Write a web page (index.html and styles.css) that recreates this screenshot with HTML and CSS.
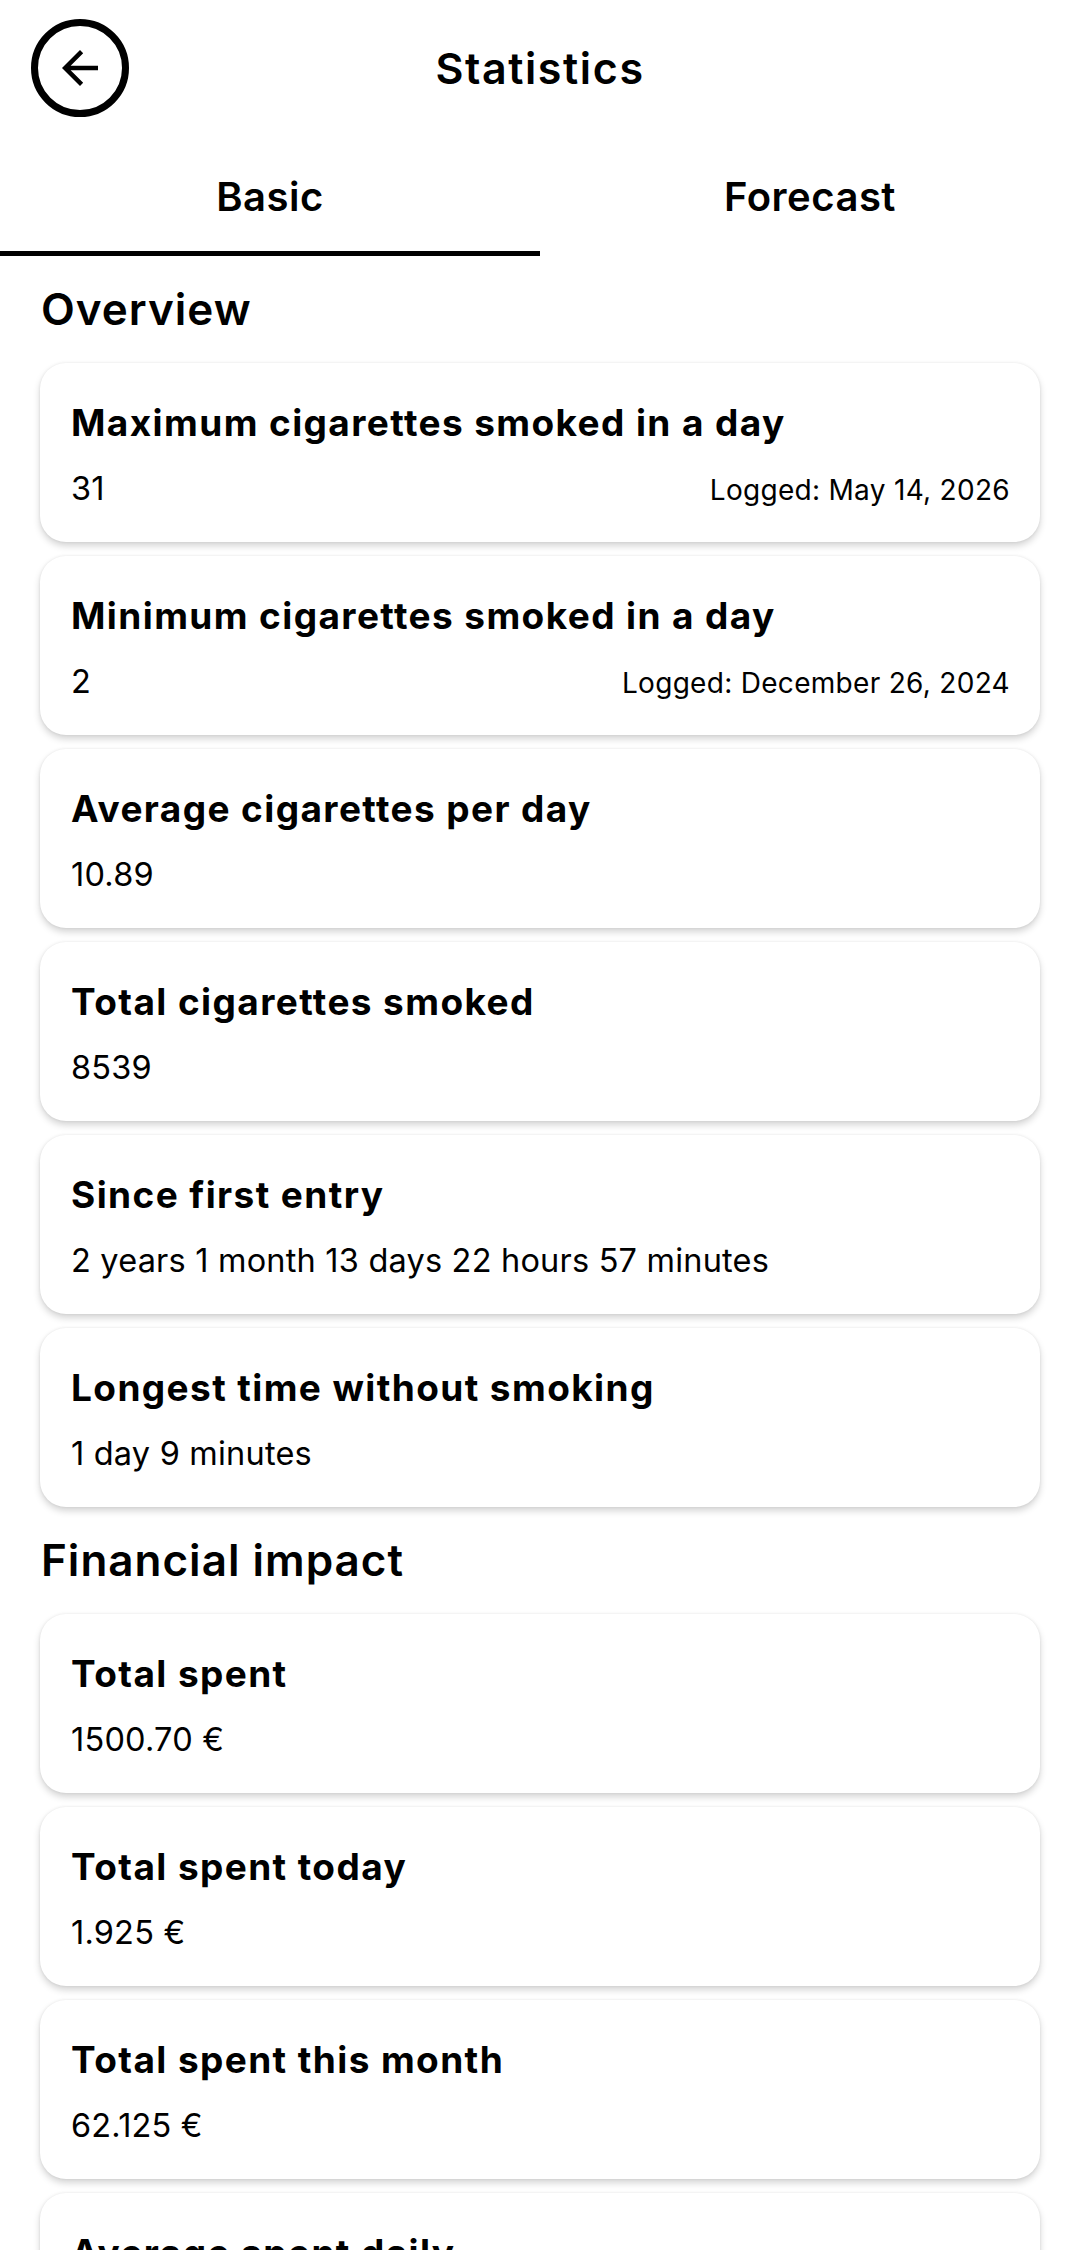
FILE: index.html
```html
<!DOCTYPE html>
<html lang="en">
<head>
<meta charset="utf-8">
<title>Statistics</title>
<link rel="stylesheet" href="styles.css">
</head>
<body>
<div class="app">
  <header class="topbar">
    <div class="topbar-left">
      <button class="back-btn" aria-label="Back">
        <svg viewBox="0 0 24 24" width="54" height="54"><path d="M20 11H7.83l5.59-5.59L12 4l-8 8 8 8 1.41-1.41L7.83 13H20v-2z" fill="#000"/></svg>
      </button>
    </div>
    <h1 class="title">Statistics</h1>
    <div class="topbar-right"></div>
  </header>

  <nav class="tabs">
    <div class="tab active">Basic</div>
    <div class="tab">Forecast</div>
  </nav>

  <main class="content">
    <h2 class="section-title">Overview</h2>
    <div class="card-list">
      <div class="card">
        <div class="card-title">Maximum cigarettes smoked in a day</div>
        <div class="card-row"><span class="card-value">31</span><span class="card-note">Logged: May 14, 2026</span></div>
      </div>
      <div class="card">
        <div class="card-title">Minimum cigarettes smoked in a day</div>
        <div class="card-row"><span class="card-value">2</span><span class="card-note">Logged: December 26, 2024</span></div>
      </div>
      <div class="card">
        <div class="card-title">Average cigarettes per day</div>
        <div class="card-row"><span class="card-value">10.89</span></div>
      </div>
      <div class="card">
        <div class="card-title">Total cigarettes smoked</div>
        <div class="card-row"><span class="card-value">8539</span></div>
      </div>
      <div class="card">
        <div class="card-title">Since first entry</div>
        <div class="card-row"><span class="card-value">2 years 1 month 13 days 22 hours 57 minutes</span></div>
      </div>
      <div class="card">
        <div class="card-title">Longest time without smoking</div>
        <div class="card-row"><span class="card-value">1 day 9 minutes</span></div>
      </div>
    </div>

    <h2 class="section-title">Financial impact</h2>
    <div class="card-list">
      <div class="card">
        <div class="card-title">Total spent</div>
        <div class="card-row"><span class="card-value">1500.70 €</span></div>
      </div>
      <div class="card">
        <div class="card-title">Total spent today</div>
        <div class="card-row"><span class="card-value">1.925 €</span></div>
      </div>
      <div class="card">
        <div class="card-title">Total spent this month</div>
        <div class="card-row"><span class="card-value">62.125 €</span></div>
      </div>
      <div class="card">
        <div class="card-title">Average spent daily</div>
        <div class="card-row"><span class="card-value">0.70 €</span></div>
      </div>
    </div>
  </main>
</div>
</body>
</html>
```

FILE: styles.css
```css
* { box-sizing: border-box; }

html, body {
  margin: 0;
  padding: 0;
  background: #ffffff;
}

body {
  font-family: Inter, "Open Sans", Roboto, sans-serif;
  color: #000;
  width: 1080px;
  height: 2250px;
  overflow: hidden;
}

.topbar {
  display: grid;
  grid-template-columns: 1fr auto 1fr;
  align-items: center;
  height: 136px;
}

.topbar-left {
  padding-left: 31px;
}

.back-btn {
  width: 98px;
  height: 98px;
  border: 7px solid #000;
  border-radius: 50%;
  background: #fff;
  display: flex;
  align-items: center;
  justify-content: center;
  padding: 0;
}

.title {
  margin: 0;
  font-size: 43px;
  font-weight: 600;
  letter-spacing: 1.6px;
  line-height: 50px;
}

.tabs {
  display: flex;
}

.tab {
  flex: 1;
  text-align: center;
  font-size: 40px;
  font-weight: 600;
  letter-spacing: 0.5px;
  line-height: 48px;
  padding: 37px 0 30px;
  border-bottom: 5px solid transparent;
}

.tab.active {
  border-bottom-color: #000;
}

.content {
  padding: 0 40px;
}

.section-title {
  margin: 28px 0 29px 1px;
  font-size: 44px;
  font-weight: 600;
  letter-spacing: 1px;
  line-height: 50px;
}

.card-list {
  display: flex;
  flex-direction: column;
  gap: 14px;
}

.card {
  height: 179px;
  background: #fff;
  border-radius: 26px;
  padding: 38px 30px 0 31px;
  box-shadow: 0 4px 7px rgba(0, 0, 0, 0.17), 0 0 3px rgba(0, 0, 0, 0.08);
}

.card-title {
  font-size: 37px;
  font-weight: 700;
  letter-spacing: 1.4px;
  line-height: 44px;
  margin-bottom: 24px;
  white-space: nowrap;
}

.card-row {
  display: flex;
  justify-content: space-between;
  align-items: baseline;
  line-height: 40px;
}

.card-value {
  font-size: 32.5px;
  font-weight: 400;
  letter-spacing: 0.2px;
}

.card-note {
  font-size: 28px;
  font-weight: 400;
  letter-spacing: 0.3px;
}
```
